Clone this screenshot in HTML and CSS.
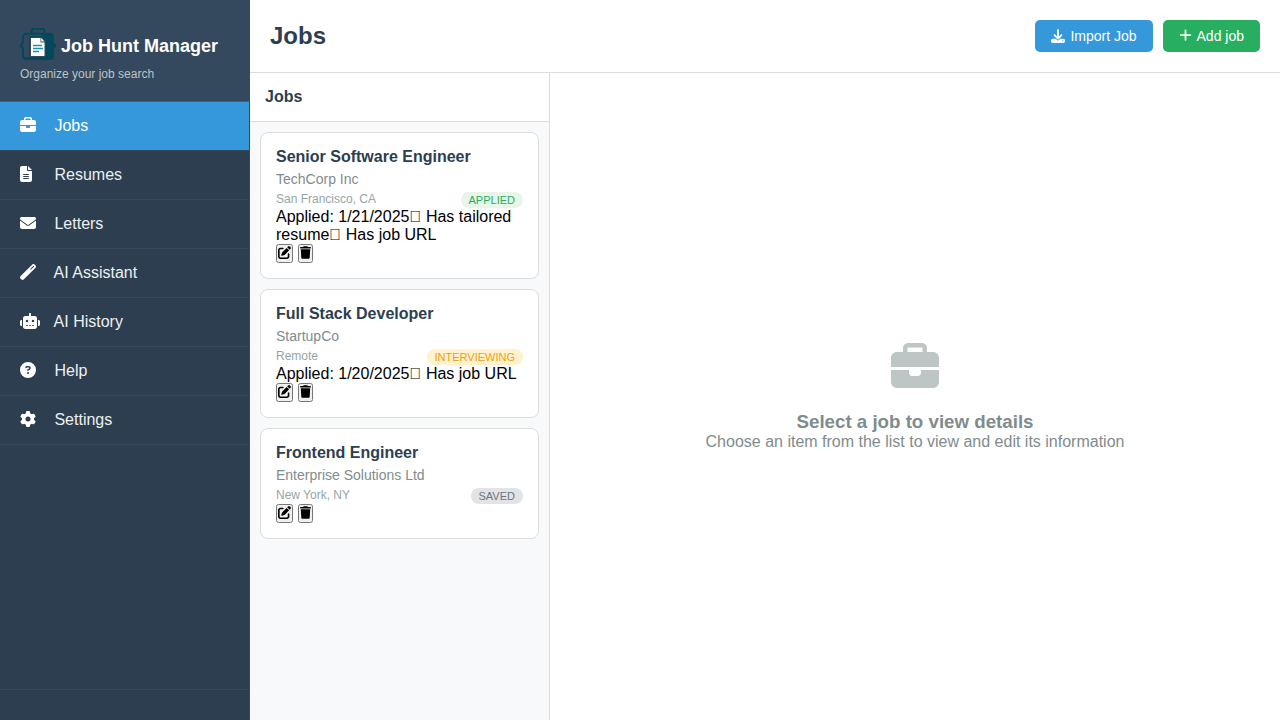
FILE: index.html
```html
<!DOCTYPE html>
<html lang="en">
<head>
<meta charset="utf-8">
<title>Job Hunt Manager</title>
<link rel="stylesheet" href="styles.css">
</head>
<body>
<svg class="sprite" aria-hidden="true">
  <symbol id="briefcase" viewBox="0 0 512 512"><path d="M184 48l144 0c4.400 0 8 3.600 8 8l0 40L176 96l0-40c0-4.400 3.600-8 8-8zm-56 8l0 40L64 96C28.700 96 0 124.700 0 160l0 96 192 0 128 0 192 0 0-96c0-35.300-28.700-64-64-64l-64 0 0-40c0-30.900-25.100-56-56-56L184 0c-30.900 0-56 25.100-56 56zM512 288l-192 0 0 32c0 17.700-14.300 32-32 32l-64 0c-17.700 0-32-14.300-32-32l0-32L0 288 0 416c0 35.300 28.700 64 64 64l384 0c35.300 0 64-28.700 64-64l0-128z"/></symbol>
  <symbol id="file" viewBox="0 0 384 512"><path d="M64 0C28.700 0 0 28.700 0 64L0 448c0 35.300 28.700 64 64 64l256 0c35.300 0 64-28.700 64-64l0-288-128 0c-17.700 0-32-14.300-32-32L224 0 64 0zM256 0l0 128 128 0L256 0zM112 256l160 0c8.800 0 16 7.200 16 16s-7.200 16-16 16l-160 0c-8.800 0-16-7.200-16-16s7.200-16 16-16zm0 64l160 0c8.800 0 16 7.200 16 16s-7.200 16-16 16l-160 0c-8.800 0-16-7.200-16-16s7.200-16 16-16zm0 64l160 0c8.800 0 16 7.200 16 16s-7.200 16-16 16l-160 0c-8.800 0-16-7.200-16-16s7.200-16 16-16z"/></symbol>
  <symbol id="envelope" viewBox="0 0 512 512"><path d="M48 64C21.500 64 0 85.500 0 112c0 15.100 7.100 29.300 19.200 38.400L236.800 313.600c11.400 8.500 27 8.500 38.400 0L492.800 150.400c12.100-9.100 19.200-23.300 19.200-38.400c0-26.500-21.500-48-48-48L48 64zM0 176L0 384c0 35.300 28.700 64 64 64l384 0c35.300 0 64-28.700 64-64l0-208L294.400 339.200c-22.800 17.100-54 17.100-76.800 0L0 176z"/></symbol>
  <symbol id="wand" viewBox="0 0 512 512"><path d="M14.100 463.300c-18.700-18.700-18.700-49.100 0-67.900L395.400 14.100c18.700-18.700 49.100-18.700 67.900 0l34.600 34.600c18.700 18.700 18.700 49.100 0 67.900L116.500 497.900c-18.700 18.700-49.100 18.700-67.900 0L14.100 463.300zM347.600 187.600l105-105L429.400 59.300l-105 105 23.300 23.300z"/></symbol>
  <symbol id="robot" viewBox="0 0 640 512"><path d="M320 0c17.700 0 32 14.300 32 32l0 64 120 0c39.800 0 72 32.200 72 72l0 272c0 39.800-32.200 72-72 72l-304 0c-39.800 0-72-32.200-72-72l0-272c0-39.800 32.200-72 72-72l120 0 0-64c0-17.700 14.300-32 32-32zM208 384c-8.800 0-16 7.200-16 16s7.200 16 16 16l32 0c8.800 0 16-7.200 16-16s-7.200-16-16-16l-32 0zm96 0c-8.800 0-16 7.200-16 16s7.200 16 16 16l32 0c8.800 0 16-7.200 16-16s-7.200-16-16-16l-32 0zm96 0c-8.800 0-16 7.200-16 16s7.200 16 16 16l32 0c8.800 0 16-7.200 16-16s-7.200-16-16-16l-32 0zM264 256a40 40 0 1 0 -80 0 40 40 0 1 0 80 0zm152 40a40 40 0 1 0 0-80 40 40 0 1 0 0 80zM48 224l16 0 0 192-16 0c-26.500 0-48-21.500-48-48l0-96c0-26.500 21.500-48 48-48zm544 0c26.500 0 48 21.500 48 48l0 96c0 26.500-21.500 48-48 48l-16 0 0-192 16 0z"/></symbol>
  <symbol id="question" viewBox="0 0 512 512"><path d="M256 512A256 256 0 1 0 256 0a256 256 0 1 0 0 512zM169.800 165.300c7.900-22.300 29.100-37.300 52.800-37.300l58.300 0c34.900 0 63.100 28.300 63.100 63.100c0 22.600-12.100 43.500-31.700 54.800L280 264.400c-.2 13-10.900 23.600-24 23.600c-13.300 0-24-10.700-24-24l0-13.500c0-8.600 4.600-16.500 12.100-20.800l44.300-25.400c4.700-2.700 7.600-7.700 7.600-13.100c0-8.400-6.800-15.100-15.100-15.100l-58.300 0c-3.400 0-6.400 2.100-7.500 5.300l-.4 1.200c-4.400 12.500-18.200 19-30.600 14.600s-19-18.200-14.600-30.600l.4-1.200zM224 352a32 32 0 1 1 64 0 32 32 0 1 1 -64 0z"/></symbol>
  <symbol id="gear" viewBox="0 0 512 512"><path d="M495.900 166.600c3.200 8.700 .5 18.400-6.400 24.600l-43.300 39.400c1.100 8.300 1.700 16.800 1.700 25.400s-.6 17.100-1.700 25.400l43.300 39.400c6.900 6.200 9.600 15.900 6.400 24.600c-4.400 11.900-9.700 23.300-15.800 34.300l-4.700 8.100c-6.600 11-14 21.400-22.100 31.200c-5.900 7.200-15.700 9.600-24.500 6.800l-55.700-17.700c-13.400 10.300-28.200 18.900-44 25.400l-12.500 57.100c-2 9.100-9 16.300-18.200 17.800c-13.800 2.300-28 3.500-42.500 3.500s-28.700-1.200-42.500-3.500c-9.200-1.500-16.200-8.700-18.200-17.800l-12.500-57.100c-15.800-6.500-30.600-15.100-44-25.400L83.100 425.900c-8.800 2.800-18.600 .3-24.500-6.800c-8.100-9.800-15.500-20.200-22.100-31.200l-4.700-8.100c-6.100-11-11.400-22.400-15.800-34.300c-3.200-8.700-.5-18.400 6.400-24.600l43.300-39.400C64.600 273.100 64 264.600 64 256s.6-17.100 1.700-25.400L22.400 191.200c-6.900-6.200-9.600-15.900-6.400-24.600c4.400-11.900 9.700-23.300 15.800-34.300l4.700-8.100c6.600-11 14-21.400 22.100-31.200c5.900-7.200 15.700-9.600 24.500-6.800l55.700 17.700c13.400-10.300 28.200-18.900 44-25.400l12.500-57.100c2-9.100 9-16.300 18.200-17.800C227.300 1.200 241.500 0 256 0s28.700 1.200 42.500 3.500c9.200 1.500 16.200 8.700 18.200 17.800l12.500 57.100c15.800 6.500 30.600 15.100 44 25.400l55.700-17.700c8.800-2.800 18.600-.3 24.500 6.800c8.100 9.800 15.500 20.200 22.100 31.200l4.700 8.100c6.100 11 11.400 22.400 15.800 34.300zM256 336a80 80 0 1 0 0-160 80 80 0 1 0 0 160z"/></symbol>
  <symbol id="download" viewBox="0 0 512 512"><path d="M288 32c0-17.700-14.300-32-32-32s-32 14.300-32 32l0 242.700-73.400-73.400c-12.500-12.500-32.800-12.500-45.300 0s-12.500 32.800 0 45.300l128 128c12.500 12.500 32.800 12.500 45.300 0l128-128c12.500-12.500 12.500-32.800 0-45.300s-32.800-12.500-45.300 0L288 274.700 288 32zM64 352c-35.300 0-64 28.700-64 64l0 32c0 35.300 28.700 64 64 64l384 0c35.300 0 64-28.700 64-64l0-32c0-35.300-28.700-64-64-64l-101.500 0-45.300 45.300c-25 25-65.500 25-90.500 0L165.500 352 64 352zm368 56a24 24 0 1 1 0 48 24 24 0 1 1 0-48z"/></symbol>
  <symbol id="plus" viewBox="0 32 448 512"><path d="M256 80c0-17.700-14.300-32-32-32s-32 14.300-32 32l0 144L48 224c-17.700 0-32 14.300-32 32s14.300 32 32 32l144 0 0 144c0 17.700 14.300 32 32 32s32-14.300 32-32l0-144 144 0c17.700 0 32-14.300 32-32s-14.300-32-32-32l-144 0 0-144z"/></symbol>
  <symbol id="edit" viewBox="0 0 512 512"><path d="M471.600 21.700c-21.900-21.900-57.300-21.900-79.200 0L362.300 51.700l97.900 97.900 30.100-30.100c21.900-21.900 21.900-57.300 0-79.200L471.600 21.700zm-299.200 220c-6.100 6.100-10.800 13.600-13.500 21.900l-29.600 88.800c-2.900 8.600-.6 18.100 5.800 24.600s15.900 8.700 24.600 5.800l88.800-29.600c8.200-2.700 15.700-7.400 21.900-13.500L437.700 172.300 339.700 74.300 172.400 241.700zM96 64C43 64 0 107 0 160L0 416c0 53 43 96 96 96l256 0c53 0 96-43 96-96l0-96c0-17.700-14.300-32-32-32s-32 14.300-32 32l0 96c0 17.700-14.300 32-32 32L96 448c-17.700 0-32-14.300-32-32l0-256c0-17.700 14.300-32 32-32l96 0c17.700 0 32-14.300 32-32s-14.300-32-32-32L96 64z"/></symbol>
  <symbol id="trash" viewBox="0 0 448 512"><path d="M135.200 17.700L128 32 32 32C14.300 32 0 46.300 0 64S14.300 96 32 96l384 0c17.700 0 32-14.300 32-32s-14.300-32-32-32l-96 0-7.200-14.300C307.400 6.800 296.300 0 284.200 0L163.800 0c-12.100 0-23.200 6.800-28.600 17.700zM416 128L32 128 53.200 467c1.600 25.300 22.600 45 47.900 45l245.800 0c25.300 0 46.300-19.700 47.900-45L416 128z"/></symbol>
</svg>

<div class="app">
  <aside class="sidebar">
    <div class="brand">
      <h1 class="brand-title">
        <svg class="logo" viewBox="0 0 36 36" aria-hidden="true">
          <path d="M11.500 5.500V2.800a2 2 0 0 1 2-2h9a2 2 0 0 1 2 2V5.500" fill="none" stroke="#04485c" stroke-width="2"/>
          <path d="M6 5.800h24a3 3 0 0 1 3 3v5q0 2 2.400 3.800q-2.400 1.800-2.400 3.800V28a3 3 0 0 1-3 3H6a3 3 0 0 1-3-3V21.400q0-2-2.400-3.800q2.400-1.800 2.400-3.800V8.800a3 3 0 0 1 3-3z" fill="none" stroke="#04485c" stroke-width="2"/>
          <path d="M22 5.200h8a3 3 0 0 1 3 3v5.600q0 2 2.400 3.800q-2.400 1.800-2.400 3.800V28a3 3 0 0 1-3 3H6q-2 0-2.600-2H9V27h13z" fill="#04485c"/>
          <path d="M9.500 8.500h12.500l4 4v17H9.500z" fill="#34495e" stroke="#04485c" stroke-width="1"/>
          <path d="M11 10h9.500v4.500h4V28H11z" fill="#fff"/>
          <path d="M21.200 10l3.300 3.600h-3.300z" fill="#fff"/>
          <path d="M13 17.500h9M13 20.500h10M13 23.500h6" stroke="#1595ab" stroke-width="1.300"/>
        </svg>
        <span>Job Hunt Manager</span>
      </h1>
      <p class="brand-sub">Organize your job search</p>
    </div>
    <nav class="nav">
      <button class="nav-item active" type="button"><svg class="nav-icon"><use href="#briefcase"/></svg><span class="nav-label"> Jobs</span></button>
      <button class="nav-item" type="button"><svg class="nav-icon narrow"><use href="#file"/></svg><span class="nav-label"> Resumes</span></button>
      <button class="nav-item" type="button"><svg class="nav-icon"><use href="#envelope"/></svg><span class="nav-label"> Letters</span></button>
      <button class="nav-item" type="button"><svg class="nav-icon"><use href="#wand"/></svg><span class="nav-label"> AI Assistant</span></button>
      <button class="nav-item" type="button"><svg class="nav-icon wide"><use href="#robot"/></svg><span class="nav-label"> AI History</span></button>
      <button class="nav-item" type="button"><svg class="nav-icon"><use href="#question"/></svg><span class="nav-label"> Help</span></button>
      <button class="nav-item" type="button"><svg class="nav-icon"><use href="#gear"/></svg><span class="nav-label"> Settings</span></button>
    </nav>
    <div class="sidebar-footer"></div>
  </aside>

  <main class="main">
    <header class="topbar">
      <h2 class="page-title">Jobs</h2>
      <div class="topbar-actions">
        <button class="btn btn-blue" type="button"><svg class="btn-icon"><use href="#download"/></svg>Import Job</button>
        <button class="btn btn-green" type="button"><svg class="btn-icon plus"><use href="#plus"/></svg>Add job</button>
      </div>
    </header>
    <div class="content">
      <section class="list-panel">
        <h3 class="list-header">Jobs</h3>
        <div class="list">
          <article class="card">
            <h4 class="card-title">Senior Software Engineer</h4>
            <p class="company">TechCorp Inc</p>
            <div class="meta"><span class="location">San Francisco, CA</span><span class="badge applied">Applied</span></div>
            <p class="note">Applied: 1/21/2025&#xf15c; Has tailored resume&#xf0c1; Has job URL</p>
            <div class="card-actions">
              <button class="icon-btn" type="button" aria-label="Edit"><svg class="edit-icon"><use href="#edit"/></svg></button>
              <button class="icon-btn" type="button" aria-label="Delete"><svg class="trash-icon"><use href="#trash"/></svg></button>
            </div>
          </article>
          <article class="card">
            <h4 class="card-title">Full Stack Developer</h4>
            <p class="company">StartupCo</p>
            <div class="meta"><span class="location">Remote</span><span class="badge interviewing">Interviewing</span></div>
            <p class="note">Applied: 1/20/2025&#xf0c1; Has job URL</p>
            <div class="card-actions">
              <button class="icon-btn" type="button" aria-label="Edit"><svg class="edit-icon"><use href="#edit"/></svg></button>
              <button class="icon-btn" type="button" aria-label="Delete"><svg class="trash-icon"><use href="#trash"/></svg></button>
            </div>
          </article>
          <article class="card">
            <h4 class="card-title">Frontend Engineer</h4>
            <p class="company">Enterprise Solutions Ltd</p>
            <div class="meta"><span class="location">New York, NY</span><span class="badge saved">Saved</span></div>
            <div class="card-actions">
              <button class="icon-btn" type="button" aria-label="Edit"><svg class="edit-icon"><use href="#edit"/></svg></button>
              <button class="icon-btn" type="button" aria-label="Delete"><svg class="trash-icon"><use href="#trash"/></svg></button>
            </div>
          </article>
        </div>
      </section>
      <section class="empty">
        <svg class="empty-icon"><use href="#briefcase"/></svg>
        <h3 class="empty-title">Select a job to view details</h3>
        <p class="empty-text">Choose an item from the list to view and edit its information</p>
      </section>
    </div>
  </main>
</div>
</body>
</html>
```
FILE: styles.css
```css
* {
  box-sizing: border-box;
  margin: 0;
  padding: 0;
}

body {
  font-family: "Liberation Sans", Arial, sans-serif;
  background: #fff;
  color: #000;
}

svg {
  fill: currentColor;
  flex-shrink: 0;
}

.sprite {
  display: none;
}

.app {
  display: flex;
  height: 100vh;
}

.sidebar {
  display: flex;
  flex-direction: column;
  flex: 0 0 250px;
  background: #2c3e50;
  border-right: 1px solid #34495e;
  color: #fff;
}

.brand {
  padding: 28px 20px 20px;
  background: #34495e;
  border-bottom: 1px solid #4a5f7a;
}

.brand-title {
  display: flex;
  align-items: center;
  gap: 5px;
  margin-bottom: 3px;
  font-size: 18px;
}

.logo {
  width: 36px;
  height: 36px;
}

.brand-sub {
  font-size: 12px;
  line-height: 14px;
  color: #bdc3c7;
}

.nav {
  flex: 1;
}

.nav-item {
  display: flex;
  align-items: flex-start;
  width: 100%;
  padding: 15px 20px;
  border: 0;
  border-bottom: 1px solid #34495e;
  background: none;
  color: #ecf0f1;
  font: inherit;
  line-height: 18px;
  text-align: left;
  cursor: pointer;
}

.nav-item.active {
  background: #3498db;
  color: #fff;
}

.nav-icon {
  width: 16px;
  height: 16px;
  margin-right: 14px;
  color: #fff;
}

.nav-icon.narrow {
  width: 12px;
  margin-right: 18px;
}

.nav-icon.wide {
  width: 20px;
  margin-right: 10px;
}

.nav-label {
  white-space: pre;
}

.sidebar-footer {
  padding: 15px 20px;
  border-top: 1px solid #34495e;
}

.main {
  display: flex;
  flex-direction: column;
  flex: 1;
  min-width: 0;
}

.topbar {
  display: flex;
  align-items: center;
  justify-content: space-between;
  padding: 20px;
  border-bottom: 1px solid #ddd;
}

.page-title {
  font-size: 24px;
  line-height: 28px;
  color: #2c3e50;
}

.topbar-actions {
  display: flex;
  gap: 10px;
}

.btn {
  display: flex;
  align-items: center;
  gap: 5px;
  padding: 8px 16px;
  border: 0;
  border-radius: 5px;
  color: #fff;
  font: inherit;
  font-size: 14px;
  line-height: 16px;
  cursor: pointer;
}

.btn-blue {
  background: #3498db;
}

.btn-green {
  background: #27ae60;
}

.btn-icon {
  width: 14px;
  height: 14px;
}

.btn-icon.plus {
  width: 13px;
}

.content {
  display: flex;
  flex: 1;
  min-height: 0;
}

.list-panel {
  display: flex;
  flex-direction: column;
  flex: 0 0 300px;
  background: #f8f9fa;
  border-right: 1px solid #ddd;
}

.list-header {
  padding: 15px;
  background: #fff;
  border-bottom: 1px solid #ddd;
  font-size: 16px;
  line-height: 18px;
  color: #2c3e50;
}

.list {
  display: flex;
  flex-direction: column;
  flex: 1;
  gap: 10px;
  padding: 10px;
  overflow-y: auto;
}

.card {
  padding: 15px;
  background: #fff;
  border: 1px solid #ddd;
  border-radius: 8px;
}

.card-title {
  margin-bottom: 5px;
  font-size: 16px;
  line-height: 18px;
  color: #2c3e50;
}

.company {
  margin-bottom: 5px;
  font-size: 14px;
  line-height: 16px;
  color: #7f8c8d;
}

.meta {
  display: flex;
  align-items: flex-start;
  justify-content: space-between;
  font-size: 12px;
  line-height: 14px;
  color: #95a5a6;
}

.badge {
  padding: 2px 8px;
  border-radius: 12px;
  font-size: 11px;
  line-height: 12px;
  text-transform: uppercase;
}

.applied {
  background: #e8f5e8;
  color: #27ae60;
}

.interviewing {
  background: #fff3cd;
  color: #f39c12;
}

.saved {
  background: #e2e3e5;
  color: #6c757d;
}

.note {
  line-height: 18px;
}

.card-actions {
  display: flex;
  gap: 5px;
}

.icon-btn {
  display: flex;
  align-items: flex-start;
  height: 19px;
  cursor: pointer;
}

.edit-icon {
  width: 13px;
  height: 13px;
}

.trash-icon {
  width: 11px;
  height: 13px;
}

.empty {
  display: flex;
  flex-direction: column;
  align-items: center;
  justify-content: center;
  flex: 1;
  color: #7f8c8d;
  text-align: center;
}

.empty-icon {
  width: 48px;
  height: 48px;
  margin-bottom: 20px;
  opacity: 0.5;
}

.empty-text {
  line-height: 18px;
}
```
